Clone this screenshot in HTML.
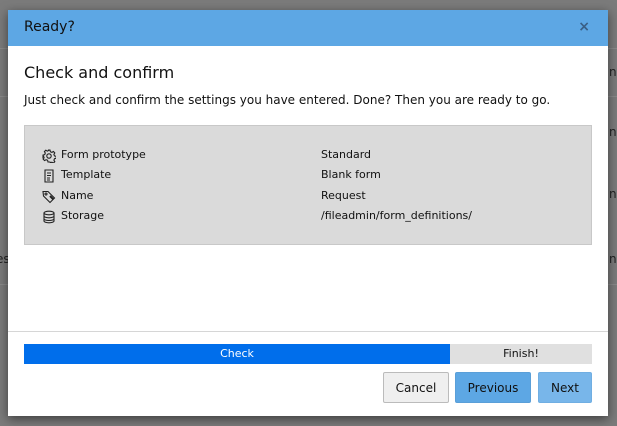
<!DOCTYPE html>
<html><head><style>
body{margin:0;width:617px;height:426px;background:#7b7b7b;font-family:"DejaVu Sans","Liberation Sans",sans-serif;position:relative;overflow:hidden}
.bgl{position:absolute;left:0;right:0;height:1px;background:#8a8a8a}
.bgt{position:absolute;font-size:12px;color:#222}
.modal{position:absolute;left:8px;top:10px;width:600px;height:406px;background:#fff;box-shadow:0 3px 10px rgba(0,0,0,.5)}
.hdr{height:36px;background:#5da7e4;position:relative}
.hdr span{position:absolute;left:16px;top:9px;font-size:14px;color:#111}
.hdr b{position:absolute;right:18px;top:9px;font-size:14px;color:#3a5f85}
h2{position:absolute;left:16px;top:53px;margin:0;font-size:16px;font-weight:normal;color:#111}
.p{position:absolute;left:16px;top:83px;font-size:12px;color:#111}
.box{position:absolute;left:16px;top:115px;width:566px;height:118px;background:#dadada;border:1px solid #c8c8c8}
.row{position:absolute;left:17px;font-size:11px;color:#111}
.row svg{position:absolute;left:0;top:1px}
.row .k{position:absolute;left:19px;white-space:nowrap}
.row .v{position:absolute;left:279px;white-space:nowrap}
.div{position:absolute;left:0;right:0;top:321px;height:1px;background:#d6d6d6}
.prog{position:absolute;left:16px;top:334px;width:568px;height:20px;background:#e0e0e0;font-size:11px}
.prog .a{position:absolute;left:0;top:0;width:426px;height:20px;background:#006eeb;color:#fff;text-align:center;line-height:20px}
.prog .b{position:absolute;left:426px;right:0;top:0;height:20px;text-align:center;line-height:20px;color:#111}
.btn{position:absolute;top:362px;height:31px;font-size:12px;line-height:31px;text-align:center;border-radius:2px;color:#111;box-sizing:border-box}
</style></head><body>
<div class="bgl" style="top:48px"></div><div class="bgl" style="top:96px"></div><div class="bgl" style="top:284px"></div>
<div class="bgt" style="left:609px;top:65px">ns</div>
<div class="bgt" style="left:609px;top:125px">ns</div>
<div class="bgt" style="left:609px;top:187px">ns</div>
<div class="bgt" style="left:609px;top:252px">ns</div>
<div class="bgt" style="left:-4px;top:252px">es</div>
<div class="modal">
<div class="hdr"><span>Ready?</span><b>×</b></div>
<h2>Check and confirm</h2>
<div class="p">Just check and confirm the settings you have entered. Done? Then you are ready to go.</div>
<div class="box">
<div class="row" style="top:22px"><svg width="14" height="14" viewBox="0 0 14 14" fill="none" stroke="#222" stroke-width="1.1"><circle cx="7" cy="7" r="2.2"/><path d="M6 1h2l.4 1.7 1.5.7 1.5-.9 1.4 1.4-.9 1.5.6 1.5 1.7.4v2l-1.7.4-.6 1.5.9 1.5-1.4 1.4-1.5-.9-1.5.6L8 13H6l-.4-1.7-1.5-.6-1.5.9-1.4-1.4.9-1.5-.6-1.5L1 8V6l1.7-.4.6-1.5-.9-1.5 1.4-1.4 1.5.9 1.5-.7z"/></svg><span class="k">Form prototype</span><span class="v">Standard</span></div>
<div class="row" style="top:42px"><svg width="14" height="14" viewBox="0 0 14 14" fill="none" stroke="#222" stroke-width="1.1"><path d="M3 1h8v12H3z M5 4h4M5 6.5h4M5 9h3M5 11h3"/></svg><span class="k">Template</span><span class="v">Blank form</span></div>
<div class="row" style="top:63px"><svg width="14" height="14" viewBox="0 0 14 14" fill="none" stroke="#222" stroke-width="1.1"><path d="M1 1.5h5l6.5 6.5-4.5 4.5L1.5 6z"/><circle cx="4" cy="4" r="1"/><path d="M8 6l3 3" stroke-width="2"/></svg><span class="k">Name</span><span class="v">Request</span></div>
<div class="row" style="top:83px"><svg width="14" height="14" viewBox="0 0 14 14" fill="none" stroke="#222" stroke-width="1.1"><ellipse cx="7" cy="3" rx="5" ry="1.8"/><path d="M2 3v8c0 1 2.2 1.8 5 1.8s5-.8 5-1.8V3M2 6c0 1 2.2 1.8 5 1.8s5-.8 5-1.8M2 8.7c0 1 2.2 1.8 5 1.8s5-.8 5-1.8"/></svg><span class="k">Storage</span><span class="v">/fileadmin/form_definitions/</span></div>
</div>
<div class="div"></div>
<div class="prog"><div class="a">Check</div><div class="b">Finish!</div></div>
<div class="btn" style="left:375px;width:66px;background:#efefef;border:1px solid #bbb">Cancel</div>
<div class="btn" style="left:447px;width:76px;background:#5da7e4;border:1px solid #5a9fd8">Previous</div>
<div class="btn" style="left:530px;width:54px;background:#78b6ea;border:1px solid #70aee2">Next</div>
</div>
</body></html>
